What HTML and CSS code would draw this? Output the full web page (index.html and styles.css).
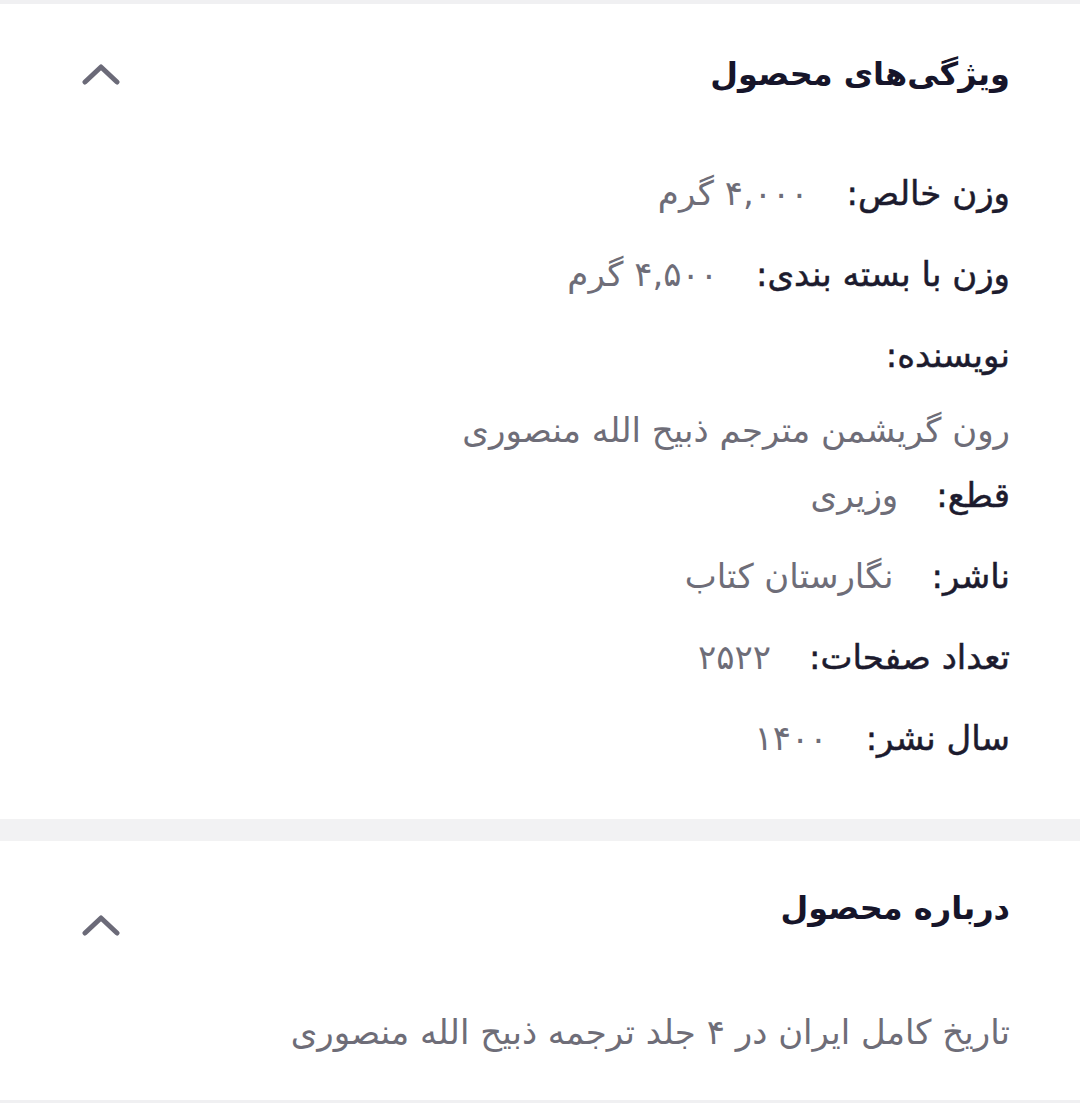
FILE: index.html
```html
<!DOCTYPE html>
<html lang="fa" dir="rtl">
<head>
  <meta charset="UTF-8">
  <title>ویژگی‌های محصول</title>
  <link rel="stylesheet" href="styles.css">
</head>
<body>

<section class="panel panel-specs">
  <div class="panel-head">
    <h2>ویژگی‌های محصول</h2>
    <svg class="chevron" width="38" height="22" viewBox="0 0 38 22"><path d="M3 19 L19 4 L35 19" fill="none" stroke="#6b6a78" stroke-width="5" stroke-linecap="round" stroke-linejoin="round"/></svg>
  </div>

  <ul class="specs">
    <li><span class="label">وزن خالص:</span><span class="value">۴,۰۰۰ گرم</span></li>
    <li><span class="label">وزن با بسته بندی:</span><span class="value">۴,۵۰۰ گرم</span></li>
    <li class="stacked"><span class="label">نویسنده:</span><span class="value">رون گریشمن مترجم ذبیح الله منصوری</span></li>
    <li class="after-stack"><span class="label">قطع:</span><span class="value">وزیری</span></li>
    <li><span class="label">ناشر:</span><span class="value">نگارستان کتاب</span></li>
    <li><span class="label">تعداد صفحات:</span><span class="value">۲۵۲۲</span></li>
    <li><span class="label">سال نشر:</span><span class="value">۱۴۰۰</span></li>
  </ul>
</section>

<div class="divider"></div>

<section class="panel panel-about">
  <div class="panel-head">
    <h2>درباره محصول</h2>
    <svg class="chevron" width="38" height="22" viewBox="0 0 38 22"><path d="M3 19 L19 4 L35 19" fill="none" stroke="#6b6a78" stroke-width="5" stroke-linecap="round" stroke-linejoin="round"/></svg>
  </div>
  <p class="about-text">تاریخ کامل ایران در ۴ جلد ترجمه ذبیح الله منصوری</p>
</section>

</body>
</html>
```

FILE: styles.css
```css
body {
  margin: 0;
  background: #fff;
  font-family: "DejaVu Sans", "Noto Sans", sans-serif;
  color: #1c1b2e;
  border-top: 4px solid #f0f0f2;
}

.panel {
  padding: 0 70px 0 82px;
}

.panel-head {
  display: flex;
  align-items: center;
  justify-content: space-between;
}

.panel-head h2 {
  margin: 0;
  font-size: 32px;
  font-weight: bold;
  color: #16152a;
}

.chevron {
  display: block;
}

.panel-specs .panel-head {
  height: 140px;
}

.specs {
  list-style: none;
  margin: 0;
  padding: 9px 0 40px;
}

.specs li {
  display: flex;
  align-items: baseline;
  gap: 38px;
  height: 81px;
  line-height: 81px;
  font-size: 34px;
}

.specs li.stacked {
  flex-direction: column;
  align-items: flex-start;
  gap: 0;
  height: auto;
}

.specs li.stacked .value {
  line-height: 68px;
}

.specs li.after-stack {
  height: 72px;
  line-height: 62px;
}

.label {
  color: #1c1b2e;
  -webkit-text-stroke: 0.5px #1c1b2e;
}

.value {
  color: #6e6d78;
}

.divider {
  height: 22px;
  background: #f2f2f3;
}

.panel-about {
  border-bottom: 3px solid #f0f0f2;
}

.panel-about .panel-head {
  height: 134px;
}

.panel-about .chevron {
  margin-top: 34px;
}

.about-text {
  margin: 0;
  padding: 37px 0 48px;
  font-size: 34px;
  color: #6e6d78;
}
```
